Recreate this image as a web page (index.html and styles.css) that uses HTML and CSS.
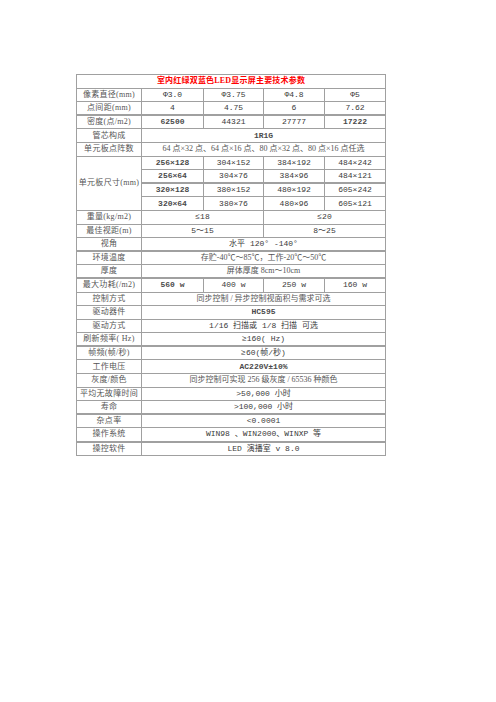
FILE: index.html
```html
<!DOCTYPE html>
<html lang="zh-CN">
<head>
<meta charset="utf-8">
<title>室内红绿双蓝色LED显示屏主要技术参数</title>
<link rel="stylesheet" href="styles.css">
</head>
<body>
<div class="page">
<table class="spec">
  <colgroup>
    <col class="c-label"><col class="c-a"><col class="c-b"><col class="c-c"><col class="c-d">
  </colgroup>
  <tr><td colspan="5" class="title">室内红绿双蓝色LED显示屏主要技术参数</td></tr>
  <tr><td class="lab">像素直径(mm)</td><td>Φ3.0</td><td>Φ3.75</td><td>Φ4.8</td><td>Φ5</td></tr>
  <tr><td class="lab">点间距(mm)</td><td>4</td><td>4.75</td><td>6</td><td>7.62</td></tr>
  <tr class="thick"><td class="lab">密度(点/m2)</td><td class="b">62500</td><td>44321</td><td>27777</td><td class="b">17222</td></tr>
  <tr><td class="lab">管芯构成</td><td colspan="4" class="b">1R1G</td></tr>
  <tr><td class="lab">单元板点阵数</td><td colspan="4" class="zh">64 点×32 点、64 点×16 点、80 点×32 点、80 点×16 点任选</td></tr>
  <tr><td class="lab" rowspan="4">单元板尺寸(mm)</td><td class="b">256×128</td><td>304×152</td><td>384×192</td><td>484×242</td></tr>
  <tr><td class="b">256×64</td><td>304×76</td><td>384×96</td><td>484×121</td></tr>
  <tr class="thick"><td class="b">320×128</td><td>380×152</td><td>480×192</td><td>605×242</td></tr>
  <tr><td class="b">320×64</td><td>380×76</td><td>480×96</td><td>605×121</td></tr>
  <tr><td class="lab">重量(kg/m2)</td><td colspan="2">≤18</td><td colspan="2">≤20</td></tr>
  <tr><td class="lab">最佳视距(m)</td><td colspan="2">5～15</td><td colspan="2">8～25</td></tr>
  <tr><td class="lab">视角</td><td colspan="4">水平 120° -140°</td></tr>
  <tr class="thick"><td class="lab">环境温度</td><td colspan="4" class="zh">存贮-40℃～85℃，工作-20℃～50℃</td></tr>
  <tr><td class="lab">厚度</td><td colspan="4" class="zh">屏体厚度 8cm～10cm</td></tr>
  <tr class="thick"><td class="lab">最大功耗(/m2)</td><td class="b">560 w</td><td>400 w</td><td>250 w</td><td>160 w</td></tr>
  <tr><td class="lab">控制方式</td><td colspan="4" class="zh">同步控制 / 异步控制视面积与需求可选</td></tr>
  <tr><td class="lab">驱动器件</td><td colspan="4" class="b">HC595</td></tr>
  <tr><td class="lab">驱动方式</td><td colspan="4">1/16 扫描或 1/8 扫描 可选</td></tr>
  <tr><td class="lab">刷新频率( Hz)</td><td colspan="4">≥160( Hz)</td></tr>
  <tr class="thick"><td class="lab">帧频(帧/秒)</td><td colspan="4">≥60(帧/秒)</td></tr>
  <tr><td class="lab">工作电压</td><td colspan="4" class="b">AC220V±10%</td></tr>
  <tr><td class="lab">灰度/颜色</td><td colspan="4" class="zh">同步控制可实现 256 级灰度 / 65536 种颜色</td></tr>
  <tr><td class="lab">平均无故障时间</td><td colspan="4">&gt;50,000 小时</td></tr>
  <tr><td class="lab">寿命</td><td colspan="4">&gt;100,000 小时</td></tr>
  <tr class="thick"><td class="lab">杂点率</td><td colspan="4">&lt;0.0001</td></tr>
  <tr><td class="lab">操作系统</td><td colspan="4">WIN98 、WIN2000、WINXP 等</td></tr>
  <tr class="thick"><td class="lab">操控软件</td><td colspan="4">LED 演播室 v 8.0</td></tr>
</table>
</div>
</body>
</html>
```
FILE: styles.css
```css
html, body {
  margin: 0;
  padding: 0;
  background: #ffffff;
}

.page {
  padding: 74px 0 0 76px;
}

.spec {
  border-collapse: collapse;
  table-layout: fixed;
  width: 309px;
  border: 1px solid #a0a0a0;
  font-family: "Liberation Mono", "Noto Sans CJK SC", monospace;
  font-size: 8px;
  color: #3a3a3a;
}

.c-label { width: 65px; }
.c-a { width: 62px; }
.c-b { width: 60px; }
.c-c { width: 61px; }
.c-d { width: 61px; }

.spec tr {
  height: 13.6px;
}

.spec td {
  border: 1px solid #a0a0a0;
  padding: 0;
  text-align: center;
  vertical-align: middle;
  line-height: 10px;
  white-space: nowrap;
  overflow: hidden;
}

.spec tr.thick td {
  border-top: 2px solid #a0a0a0;
}

.spec td.title {
  color: #ff0000;
  font-weight: bold;
  font-family: "Liberation Serif", "Noto Sans CJK SC", serif;
  font-size: 8px;
  letter-spacing: 0.2px;
}

.spec td.lab {
  font-family: "Liberation Serif", "Noto Sans CJK SC", serif;
  color: #555555;
  font-size: 8px;
  letter-spacing: 0.3px;
}

.spec td.zh {
  font-family: "Liberation Serif", "Noto Sans CJK SC", serif;
  color: #555555;
}

.spec td.b {
  font-weight: bold;
  color: #4a4a4a;
}
```
